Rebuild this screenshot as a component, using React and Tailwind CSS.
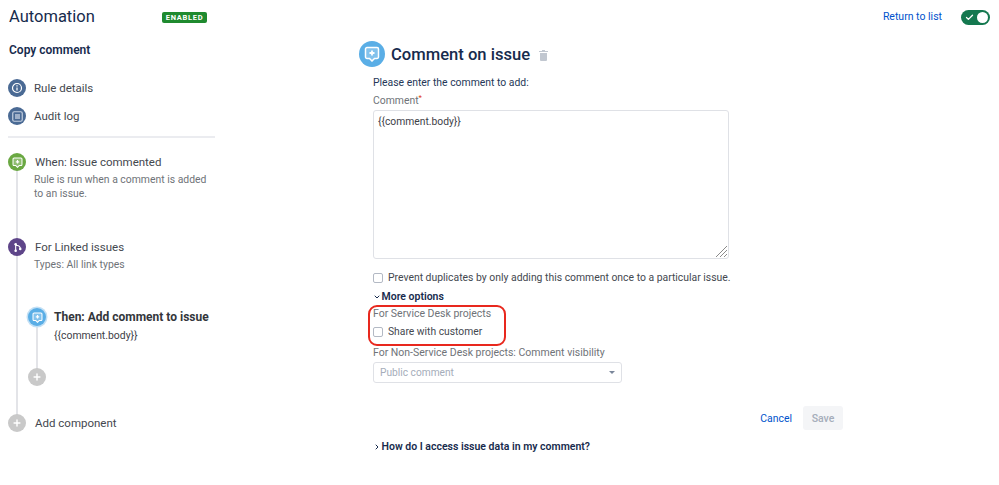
import React from "react";
import { ChevronDown, ChevronRight, Check, Plus } from "lucide-react";

function CommentIcon({ size = 12 }) {
  return (
    <svg width={size} height={size} viewBox="0 0 16 16" fill="none">
      <path d="M3 1.5h10a1.5 1.5 0 0 1 1.5 1.5v8a1.5 1.5 0 0 1-1.5 1.5h-2.5L8 15l-2.5-2.5H3A1.5 1.5 0 0 1 1.5 11V3A1.5 1.5 0 0 1 3 1.5z" fill="#fff" fillOpacity="0.25" stroke="#fff" strokeWidth="1.5" />
      <path d="M8 4.5v5M5.5 7h5" stroke="#fff" strokeWidth="1.8" />
    </svg>
  );
}

function Dot({ className, children }) {
  return (
    <div className={`flex h-[18px] w-[18px] shrink-0 items-center justify-center rounded-full text-white ${className}`}>
      {children}
    </div>
  );
}

function Sidebar() {
  return (
    <div className="w-[215px] shrink-0 pl-[8px]">
      <div className="flex h-[34px] items-center">
        <h1 className="ml-px text-[16.5px] leading-none text-[#172b4d]">Automation</h1>
        <span className="ml-[67px] rounded-[2px] bg-[#1f8a2f] px-[4px] text-[7.5px] font-bold leading-[11px] tracking-[0.7px] text-white">ENABLED</span>
      </div>
      <div className="ml-px mt-[8px] text-[12px] font-semibold leading-4 text-[#172b4d]">Copy comment</div>

      <div className="mt-[21px] flex h-[18px] items-center gap-[8px]">
        <Dot className="bg-[#4a6a94]">
          <svg width="12" height="12" viewBox="0 0 12 12" fill="none">
            <circle cx="6" cy="6" r="4.5" stroke="#fff" strokeWidth="1.2" />
            <path d="M6 3.2v1.2M6 5.4v3.2" stroke="#fff" strokeWidth="1.2" />
          </svg>
        </Dot>
        <span className="pt-px text-[11.5px] text-[#44484f]">Rule details</span>
      </div>
      <div className="mt-[10px] flex h-[18px] items-center gap-[8px]">
        <Dot className="bg-[#4a6a94]">
          <svg width="11" height="11" viewBox="0 0 11 11" fill="none">
            <rect x="0.75" y="0.75" width="9.5" height="9.5" rx="1.5" stroke="#c5d0e0" strokeWidth="1.2" />
            <rect x="3" y="3" width="5" height="5" fill="#9fb0c8" />
          </svg>
        </Dot>
        <span className="pt-px text-[11.5px] text-[#44484f]">Audit log</span>
      </div>
      <div className="mt-[11px] h-[2px] bg-[#ebecf0]" />

      <div className="relative mt-[15px]">
        <div className="absolute bottom-[9px] left-[8px] top-[9px] w-[2px] bg-[#e3e4e8]" />
        <div className="relative flex h-[18px] items-center gap-[9px]">
          <Dot className="bg-[#6aa842]"><CommentIcon size={11} /></Dot>
          <span className="pt-px text-[11.5px] text-[#44484f]">When: Issue commented</span>
        </div>
        <p className="ml-[26px] mt-[2px] w-[180px] text-[10.4px] leading-[14px] text-[#6f7378]">Rule is run when a comment is added to an issue.</p>

        <div className="relative mt-[37px] flex h-[18px] items-center gap-[9px]">
          <Dot className="bg-[#5e4589]">
            <svg width="11" height="11" viewBox="0 0 12 12" fill="none">
              <circle cx="4" cy="2.5" r="1.4" fill="#fff" />
              <circle cx="4" cy="9.5" r="1.4" fill="#fff" />
              <circle cx="9" cy="7.5" r="1.4" fill="#fff" />
              <path d="M4 3v6M4 3.5c2.5 0 5 1 5 4" stroke="#fff" strokeWidth="1.2" />
            </svg>
          </Dot>
          <span className="pt-px text-[11.5px] text-[#44484f]">For Linked issues</span>
        </div>
        <div className="relative ml-[26px] mt-[1px] text-[10.4px] leading-[16px] text-[#6f7378]">Types: All link types</div>

        <div className="relative ml-[20px]">
          <div className="absolute bottom-[9px] left-[8px] top-0 w-[2px] bg-[#e3e4e8]" />
          <div className="relative mt-[35px] flex h-[18px] w-[200px] items-center gap-[8px]">
            <Dot className="bg-[#5aaee6] shadow-[0_0_0_1.5px_#c3e0f5]"><CommentIcon size={11} /></Dot>
            <span className="whitespace-nowrap text-[12px] font-bold text-[#33363b]">Then: Add comment to issue</span>
          </div>
          <div className="relative ml-[26px] mt-[2px] text-[10.4px] leading-[16px] text-[#3d4047]">{"{{comment.body}}"}</div>
          <div className="relative mt-[24px] flex h-[18px] items-center">
            <Dot className="bg-[#c9c9c9]"><Plus size={10} strokeWidth={3.5} /></Dot>
          </div>
        </div>

        <div className="relative mt-[28px] flex h-[18px] items-center gap-[9px]">
          <Dot className="bg-[#c9c9c9]"><Plus size={10} strokeWidth={3.5} /></Dot>
          <span className="pt-[2px] text-[11.5px] text-[#44484f]">Add component</span>
        </div>
      </div>
    </div>
  );
}

function Main() {
  return (
    <div className="ml-[144px] w-[640px] shrink-0">
      <div className="flex h-[34px] items-center justify-end">
        <a className="text-[10.5px] text-[#0052cc]">Return to list</a>
        <div className="ml-[19px] mr-[9px] flex h-[15px] w-[29px] items-center justify-between rounded-full bg-[#14784f] pl-[4px] pr-[2px]">
          <Check size={9} strokeWidth={3.5} className="text-white" />
          <div className="h-[11px] w-[11px] rounded-full bg-white" />
        </div>
      </div>

      <div className="mt-[7px] flex h-[26px] items-center">
        <div className="flex h-[26px] w-[26px] items-center justify-center rounded-full bg-[#5aaee6]">
          <CommentIcon size={16} />
        </div>
        <h2 className="ml-[6px] pt-[3px] text-[16.6px] font-medium text-[#172b4d]">Comment on issue</h2>
        <svg width="9" height="11" viewBox="0 0 9 11" className="ml-[9px] mt-[2px]" fill="#c1c7d0">
          <path d="M3 0h3v1h3v1H0V1h3zM1 3h7v7a1 1 0 0 1-1 1H2a1 1 0 0 1-1-1z" />
        </svg>
      </div>

      <div className="ml-[14px] w-[356px]">
        <div className="mt-[8px] text-[10.4px] leading-[16px] text-[#253858]">Please enter the comment to add:</div>
        <div className="mt-[2px] text-[10.4px] leading-[16px] text-[#6f7378]">Comment<sup className="text-[#de350b]">*</sup></div>
        <div className="relative mt-[1px]">
          <textarea
            className="block h-[149px] w-[356px] resize-none rounded-[3px] border border-[#dfe1e6] bg-white px-[4px] py-[3px] text-[10.3px] leading-[16px] text-[#3d4047] outline-none"
            defaultValue="{{comment.body}}"
          />
          <svg width="13" height="13" viewBox="0 0 13 13" className="absolute bottom-[1px] right-[1px]" stroke="#8a8a8a" strokeWidth="1">
            <path d="M1 12L12 1M5 12l7-7M9 12l3-3" />
          </svg>
        </div>
        <label className="mt-[12px] flex h-[14px] items-center gap-[5px] whitespace-nowrap">
          <span className="h-[10px] w-[10px] shrink-0 rounded-[2px] border border-[#b3b9c4] bg-white" />
          <span className="text-[10.4px] text-[#44484f]">Prevent duplicates by only adding this comment once to a particular issue.</span>
        </label>
        <div className="mt-[5px] flex h-[14px] items-center">
          <ChevronDown size={8} strokeWidth={3} className="text-[#172b4d]" />
          <span className="ml-[0.5px] text-[10.5px] font-semibold text-[#172b4d]">More options</span>
        </div>

        <div className="relative">
          <div className="pointer-events-none absolute -left-[5px] -top-[2px] h-[41px] w-[138px] rounded-[9px] border-2 border-[#e8281e]" />
          <div className="mt-[3px] text-[10.5px] leading-[14px] text-[#6f7378]">For Service Desk projects</div>
          <label className="mt-[4px] flex h-[14px] items-center gap-[5px]">
            <span className="h-[10px] w-[10px] shrink-0 rounded-[2px] border border-[#b3b9c4] bg-white" />
            <span className="text-[10.3px] text-[#44484f]">Share with customer</span>
          </label>
        </div>

        <div className="mt-[7px] text-[10.5px] leading-[14px] text-[#6f7378]">For Non-Service Desk projects: Comment visibility</div>
        <div className="mt-[2px] flex h-[21px] w-[249px] items-center justify-between rounded-[3px] border border-[#dfe1e6] bg-white px-[6px]">
          <span className="text-[10.2px] text-[#a5adba]">Public comment</span>
          <span className="h-0 w-0 border-x-[3px] border-t-[3px] border-x-transparent border-t-[#7a869a]" />
        </div>

        <div className="mt-[23px] flex items-center justify-end">
          <div className="-mr-[114px] flex items-center">
            <a className="pt-px text-[10.4px] text-[#0052cc]">Cancel</a>
            <span className="ml-[11px] flex h-[24px] w-[40px] items-center justify-center rounded-[3px] bg-[#f4f5f7] pt-px text-[10.5px] font-medium text-[#a5adba]">Save</span>
          </div>
        </div>

        <div className="mt-[10px] flex h-[14px] items-center">
          <ChevronRight size={8} strokeWidth={3} className="text-[#172b4d]" />
          <span className="ml-[0.5px] text-[10.5px] font-semibold text-[#172b4d]">How do I access issue data in my comment?</span>
        </div>
      </div>
    </div>
  );
}

export default function App() {
  return (
    <div className="flex h-[485px] w-[999px] overflow-hidden bg-white font-['Roboto',sans-serif]">
      <Sidebar />
      <Main />
    </div>
  );
}
